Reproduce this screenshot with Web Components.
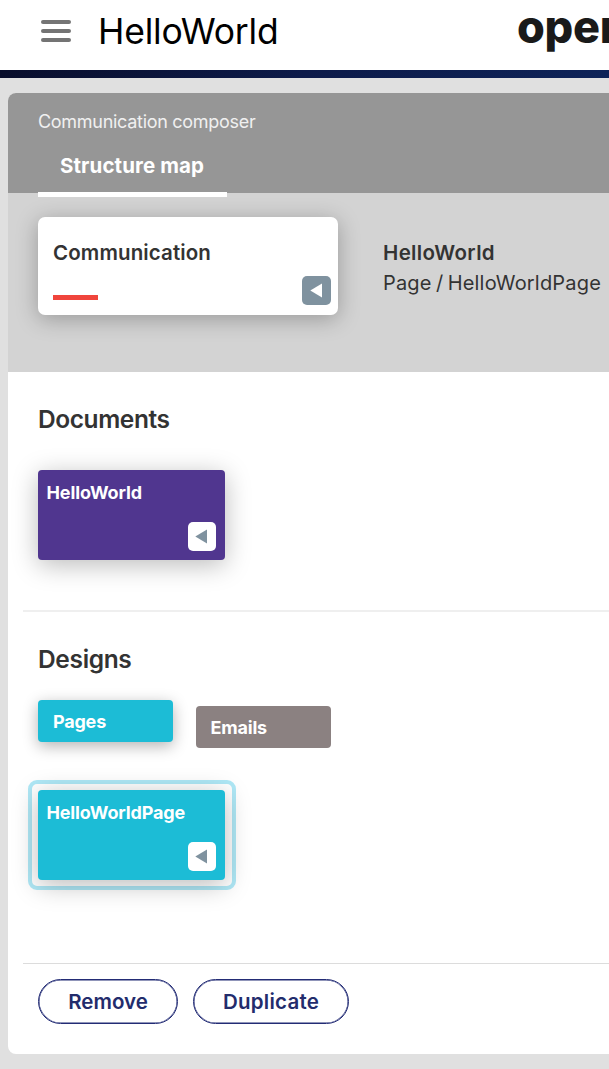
<!DOCTYPE html>
<html lang="en">
<head>
<meta charset="utf-8">
<title>HelloWorld</title>
<style>
html,body{margin:0;padding:0}
body{background:#e0e0e0;font-family:Inter,"Liberation Sans",sans-serif;color:#333;height:1069px;width:100%;overflow:hidden}
</style>
</head>
<body>
<ot-app></ot-app>
<script>
const define = (name, html, init) => {
  const t = document.createElement('template');
  t.innerHTML = html;
  customElements.define(name, class extends HTMLElement {
    constructor() {
      super();
      this.attachShadow({mode: 'open'}).append(t.content.cloneNode(true));
    }
    connectedCallback() { if (init) init(this); }
  });
};

// A single line of text tracked so that it occupies the given width.
define('ot-text', `<style>
:host{display:block;white-space:nowrap}
span{display:inline-block}
</style><span><slot></slot></span>`, el => {
  const size = el.getAttribute('size'), width = +el.getAttribute('width');
  el.style.fontSize = size + 'px';
  el.style.fontWeight = el.getAttribute('weight') || 400;
  el.style.lineHeight = (el.getAttribute('line') || 24) + 'px';
  const span = el.shadowRoot.querySelector('span');
  const n = el.textContent.length;
  if (width) el.style.letterSpacing = ((width - span.getBoundingClientRect().width) / n).toFixed(3) + 'px';
});

define('ot-arrow', `<style>
:host{display:block;width:28px;height:29px;border-radius:5px;background:#fff;color:#7f929f}
:host([solid]){width:29px;background:#7f929f;color:#fff}
:host([solid]) svg{margin-left:.5px}
svg{display:block}
</style><svg width="28" height="29" viewBox="0 0 28 29"><path d="M7.3 14.5 19 7.5v14z" fill="currentColor"/></svg>`);

define('ot-header', `<style>
:host{display:block}
.row{display:flex;align-items:flex-start;height:70px;background:#fff;overflow:hidden}
svg{display:block;flex:none;margin:20px 0 0 41px}
.title{color:#000;margin:10px 0 0 27px;width:180px;flex:none}
.logo{color:#1a1a1a;margin:.5px 0 0 239px;flex:none}
.bar{height:8px;background:linear-gradient(90deg,#090e2c,#0d1b4a 50%,#0e2358)}
</style>
<div class="row">
<svg width="30" height="22" viewBox="0 0 30 22"><g fill="#747474"><rect width="30" height="4" rx="2"/><rect y="9" width="30" height="4" rx="2"/><rect y="18" width="30" height="4" rx="2"/></g></svg>
<ot-text class="title" size="35.5" width="180.5" line="44">HelloWorld</ot-text>
<ot-text class="logo" size="45" weight="800" width="111" line="52">open</ot-text>
</div><div class="bar"></div>`);

define('ot-summary', `<style>
:host{display:flex;height:155px;padding:24px 0 0 30px;background:#d3d3d3}
.card{box-sizing:border-box;width:300px;height:98px;flex:none;background:#fff;border-radius:7px;box-shadow:0 4px 22px rgba(0,0,0,.28);padding:24px 7px 10px 15px;display:grid;grid-template-columns:1fr auto}
.card ot-text{grid-column:1/3}
.red{width:45px;height:5px;background:#f0453c;align-self:end;margin-bottom:5px}
ot-arrow{align-self:end}
.info{margin:21px 0 0 45px}
.path{word-spacing:-1.5px}
</style>
<div class="card"><ot-text size="20.5" weight="600" width="158">Communication</ot-text><span class="red"></span><ot-arrow solid></ot-arrow></div>
<div class="info"><ot-text size="20.5" weight="600" width="112" line="30">HelloWorld</ot-text><ot-text class="path" size="20" width="218" line="30">Page / HelloWorldPage</ot-text></div>`);

define('ot-tile', `<style>
:host{display:flex;flex-direction:column;justify-content:space-between;box-sizing:border-box;width:187px;height:90px;padding:11px 9px 9px 8.5px;border-radius:4px;background:var(--tile);color:#fff;box-shadow:0 5px 26px rgba(0,0,0,.27)}
ot-arrow{align-self:flex-end}
</style><slot></slot><ot-arrow></ot-arrow>`);

define('ot-chip', `<style>
:host{display:flex;align-items:center;box-sizing:border-box;width:135px;height:42px;padding:1px 0 0 14.5px;border-radius:4px;background:var(--tile);color:#fff}
:host([active]){box-shadow:0 4px 15px rgba(0,0,0,.3);padding-left:15px}
</style><slot></slot>`);

define('ot-button', `<style>
:host{display:block}
button{display:flex;align-items:center;justify-content:center;width:100%;height:45px;border:1px solid #232c75;border-radius:23px;background:#fff;color:#232c6c;font:inherit;padding:0;box-shadow:inset 0 0 0 .5px #232c75}
</style><button><slot></slot></button>`);

define('ot-app', `<style>
:host{display:block}
main{margin:15px 0 0 8px;height:961px;background:#fff;border-radius:8px 0 0 8px;overflow:hidden;display:flex;flex-direction:column}
.head{height:100px;background:#969696;box-sizing:border-box;padding:17px 0 0 30px;color:#f0f0f0;flex:none;position:relative;z-index:1}
.tab{width:167px;height:38px;padding:5px 0 0 22px;margin-top:15px;border-bottom:5px solid #fff;color:#fff}
section{padding-left:30px;flex:none;box-sizing:border-box}
.docs{height:238px;padding-top:35px}
.docs ot-tile{margin-top:39px;--tile:#50368f}
.designs{height:351px;padding-top:35px}
hr{border:0;margin:0 0 0 15px;flex:none;height:2px;background:#efefef}
hr.thin{height:1px;background:#dcdcdc}
.chips{display:flex;gap:23px;align-items:flex-start;margin-top:29px;--tile:#1cbcd6}
.chips ot-chip+ot-chip{margin-top:6px;--tile:#8b8181}
.ring{width:188px;height:90px;border:4px solid rgba(95,209,238,.5);border-radius:9px;padding:6px;margin:32px 0 0 -10px;--tile:#1cbcd6}
.actions{display:flex;gap:15px;padding:15px 0 0 30px;flex:none}
</style>
<ot-header></ot-header>
<main>
<div class="head"><ot-text size="18" width="217.5">Communication composer</ot-text><div class="tab"><ot-text size="20.5" weight="700" width="144">Structure map</ot-text></div></div>
<ot-summary></ot-summary>
<section class="docs"><ot-text size="24.5" weight="600" width="131.5">Documents</ot-text>
<ot-tile><ot-text size="18" weight="700" width="95.5">HelloWorld</ot-text></ot-tile></section>
<hr>
<section class="designs"><ot-text size="24.5" weight="600" width="93.5">Designs</ot-text>
<div class="chips"><ot-chip active><ot-text size="18" weight="700" width="53">Pages</ot-text></ot-chip><ot-chip><ot-text size="18" weight="700" width="56.5">Emails</ot-text></ot-chip></div>
<div class="ring"><ot-tile><ot-text size="18" weight="700" width="138.5">HelloWorldPage</ot-text></ot-tile></div></section>
<hr class="thin">
<div class="actions"><ot-button style="width:140px"><ot-text size="20.5" weight="600" width="79.5">Remove</ot-text></ot-button><ot-button style="width:156px"><ot-text size="20.5" weight="600" width="96">Duplicate</ot-text></ot-button></div>
</main>`);
</script>
</body>
</html>
